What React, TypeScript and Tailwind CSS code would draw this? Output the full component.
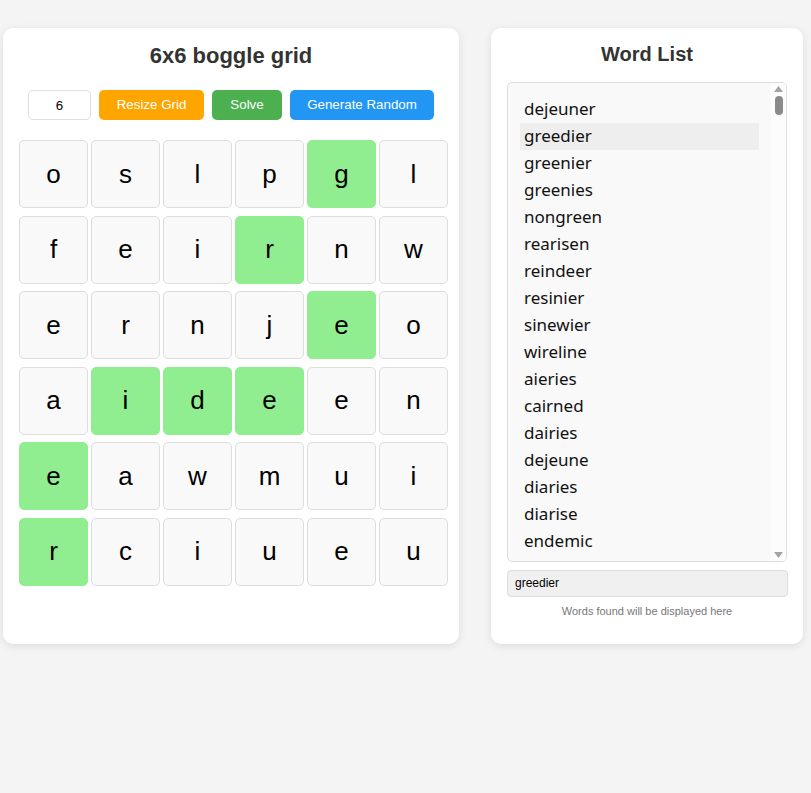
const grid = [
  ["o", "s", "l", "p", "g", "l"],
  ["f", "e", "i", "r", "n", "w"],
  ["e", "r", "n", "j", "e", "o"],
  ["a", "i", "d", "e", "e", "n"],
  ["e", "a", "w", "m", "u", "i"],
  ["r", "c", "i", "u", "e", "u"],
];

// cells of the selected word "greedier"
const path = ["0-4", "1-3", "2-4", "3-3", "3-2", "3-1", "4-0", "5-0"];

const words = [
  "dejeuner", "greedier", "greenier", "greenies", "nongreen", "rearisen",
  "reindeer", "resinier", "sinewier", "wireline", "aieries", "cairned",
  "dairies", "dejeune", "diaries", "diarise", "endemic",
];

export default function App() {
  return (
    <div className="min-h-[793px] w-[811px] bg-[#f4f4f4] font-['Liberation_Sans',Arial,sans-serif]">
      <div className="flex gap-[32px] pl-[3px] pt-[28px]">
        {/* grid panel */}
        <div className="h-[616px] w-[456px] rounded-[10px] bg-white pt-[14px] shadow-[0_2px_8px_rgba(0,0,0,0.1)]">
          <h1 className="text-center text-[22px] font-bold leading-[28px] text-[#333]">6x6 boggle grid</h1>
          <div className="mt-[20px] flex justify-center gap-[8px]">
            <input
              defaultValue="6"
              className="h-[30px] w-[63px] rounded-[5px] border border-[#ddd] bg-white text-center text-[13.33px] text-black outline-none"
            />
            <button className="h-[30px] w-[105px] rounded-[5px] bg-[#ffa500] text-[13.33px] text-white">Resize Grid</button>
            <button className="h-[30px] w-[70px] rounded-[5px] bg-[#4caf50] text-[13.33px] text-white">Solve</button>
            <button className="h-[30px] w-[144px] rounded-[5px] bg-[#2196f3] text-[13.33px] text-white">Generate Random</button>
          </div>
          <div className="ml-[16px] mt-[20px] grid w-[429px] grid-cols-6 gap-x-[3px] gap-y-[7.6px]">
            {grid.map((row, r) =>
              row.map((ch, c) => {
                const on = path.includes(`${r}-${c}`);
                return (
                  <div
                    key={`${r}-${c}`}
                    className={
                      on
                        ? "flex h-[68px] items-center justify-center rounded-[5px] border border-[#90ee90] bg-[#90ee90] text-[26px] text-black"
                        : "flex h-[68px] items-center justify-center rounded-[5px] border border-[#ddd] bg-[#f9f9f9] text-[26px] text-black"
                    }
                  >
                    {ch}
                  </div>
                );
              })
            )}
          </div>
        </div>

        {/* word list panel */}
        <div className="h-[616px] w-[312px] rounded-[10px] bg-white px-[16px] pt-[14px] shadow-[0_2px_8px_rgba(0,0,0,0.1)]">
          <h2 className="text-center text-[20px] font-bold leading-[24px] text-[#333]">Word List</h2>
          <div className="mt-[16px] flex h-[480px] w-[280px] overflow-hidden rounded-[5px] border border-[#ddd] bg-[#f9f9f9]">
            <ul className="flex-1 overflow-hidden pl-[12px] pr-[12px] pt-[13px] font-['Noto_Sans','Open_Sans',sans-serif] text-[17px] text-[#111]">
              {words.map((w) => (
                <li
                  key={w}
                  className={w === "greedier" ? "h-[27px] bg-[#eee] pl-[4px] leading-[26px]" : "h-[27px] pl-[4px] leading-[26px]"}
                >
                  {w}
                </li>
              ))}
            </ul>
            <div className="flex w-[15px] flex-col items-center justify-between bg-[#fcfcfc] py-[3px]">
              <div className="flex flex-col items-center">
                <svg width="9" height="6" viewBox="0 0 9 6"><path d="M4.5 0L9 6H0z" fill="#a3a3a3" /></svg>
                <div className="mt-[4px] h-[19px] w-[8px] rounded-[4px] bg-[#8a8a8a]" />
              </div>
              <svg width="9" height="6" viewBox="0 0 9 6"><path d="M0 0h9L4.5 6z" fill="#a3a3a3" /></svg>
            </div>
          </div>
          <div className="mt-[8px] h-[27px] w-[281px] rounded-[4px] border border-[#ddd] bg-[#f0f0f0] pl-[7px] text-[12px] leading-[25px] text-black">
            greedier
          </div>
          <p className="mt-[6px] text-center text-[11px] text-[#777]">Words found will be displayed here</p>
        </div>
      </div>
    </div>
  );
}
